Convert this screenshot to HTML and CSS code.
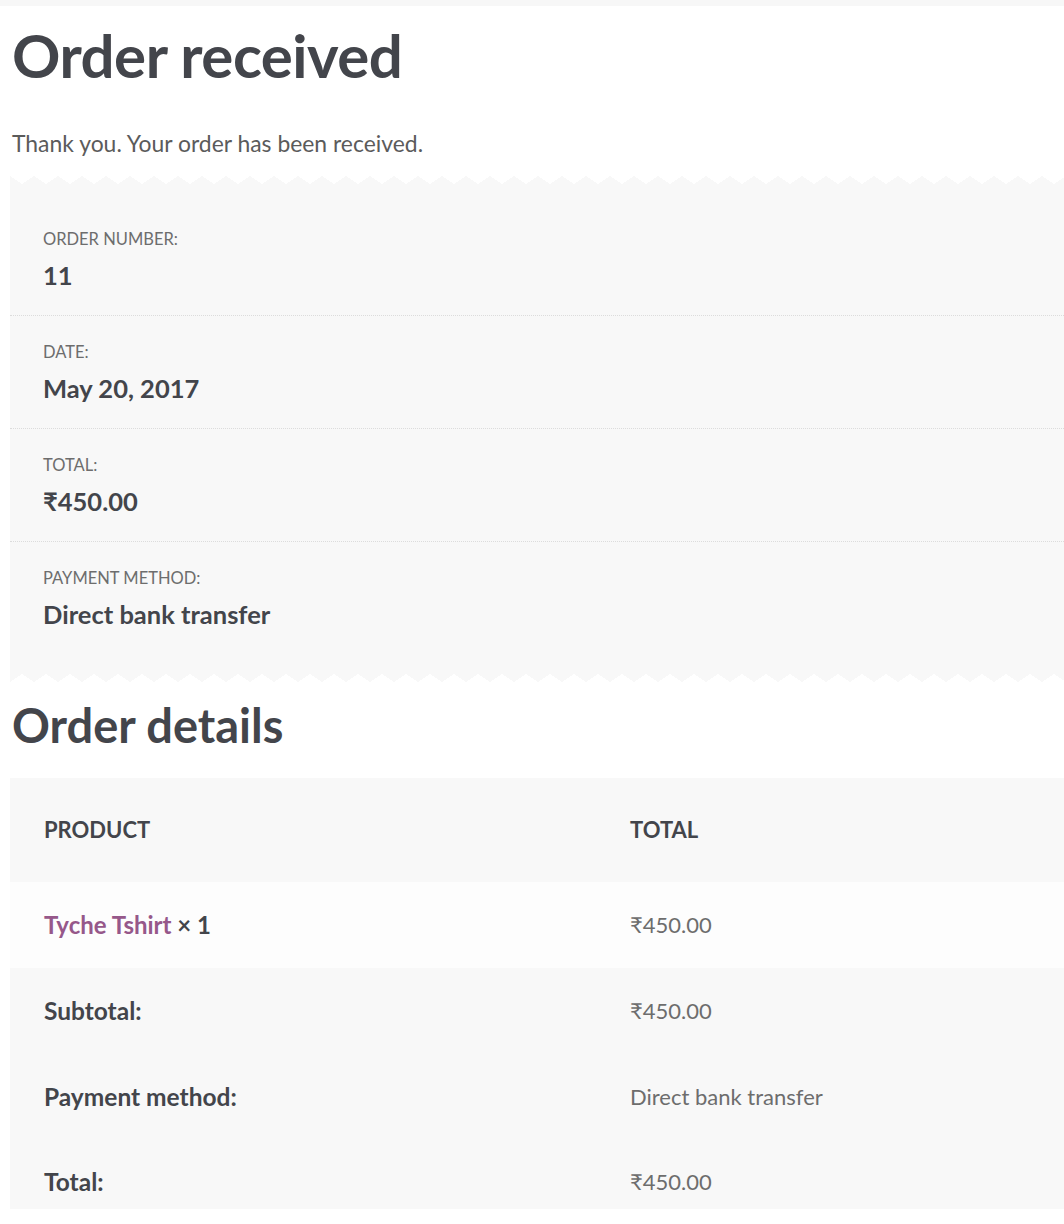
FILE: index.html
```html
<!DOCTYPE html>
<html lang="en">
<head>
    <meta charset="UTF-8">
    <title>Order received</title>
    <link rel="stylesheet" href="styles.css">
</head>
<body>
    <div class="top-strip"></div>

    <div class="page">
        <h1 class="page-title">Order received</h1>

        <p class="thankyou">Thank you. Your order has been received.</p>

        <!-- 주문 요약 (영수증 모양) -->
        <div class="receipt">
            <ul class="overview">
                <li class="overview-item">
                    <span class="overview-label">Order number:</span>
                    <strong class="overview-value">11</strong>
                </li>
                <li class="overview-item">
                    <span class="overview-label">Date:</span>
                    <strong class="overview-value">May 20, 2017</strong>
                </li>
                <li class="overview-item">
                    <span class="overview-label">Total:</span>
                    <strong class="overview-value">₹450.00</strong>
                </li>
                <li class="overview-item">
                    <span class="overview-label">Payment method:</span>
                    <strong class="overview-value">Direct bank transfer</strong>
                </li>
            </ul>
        </div>

        <h2 class="section-title">Order details</h2>

        <table class="details">
            <thead>
                <tr>
                    <th class="col-product">Product</th>
                    <th>Total</th>
                </tr>
            </thead>
            <tbody>
                <tr class="item-row">
                    <td class="col-product"><a href="#">Tyche Tshirt</a> <strong>× 1</strong></td>
                    <td>₹450.00</td>
                </tr>
            </tbody>
            <tfoot>
                <tr>
                    <th class="col-product">Subtotal:</th>
                    <td>₹450.00</td>
                </tr>
                <tr>
                    <th class="col-product">Payment method:</th>
                    <td>Direct bank transfer</td>
                </tr>
                <tr class="last-row">
                    <th class="col-product">Total:</th>
                    <td>₹450.00</td>
                </tr>
            </tfoot>
        </table>
    </div>
</body>
</html>
```

FILE: styles.css
```css
body {
    margin: 0;
    background: #ffffff;
    color: #6d6d6d;
    font-family: "Lato", "Open Sans", sans-serif;
    overflow-x: hidden;
}

/* 맨 위 얇은 회색 띠 */
.top-strip {
    height: 6px;
    background-color: #f7f7f7;
}

.page {
    padding-left: 10px;
}

.page-title {
    margin: 8px 0 0 2px;
    font-size: 60px;
    line-height: 82px;
    font-weight: 700;
    color: #43454b;
    letter-spacing: -0.5px;
}

.thankyou {
    margin: 29px 0 0 2px;
    font-size: 22.9px;
    line-height: 36px;
    color: #5b5b5b;
}

/* 영수증 박스 - 위아래 톱니 모양 */
.receipt {
    margin-top: 15px;
}

.receipt::before,
.receipt::after {
    content: "";
    display: block;
    height: 16px;
    background-size: 24px 16px;
    background-repeat: repeat-x;
}

.receipt::before {
    background-image:
        linear-gradient(to top right, #f8f8f8 50%, transparent 50%),
        linear-gradient(to top left, #f8f8f8 50%, transparent 50%);
}

.receipt::after {
    background-image:
        linear-gradient(to bottom right, #f8f8f8 50%, transparent 50%),
        linear-gradient(to bottom left, #f8f8f8 50%, transparent 50%);
}

.overview {
    list-style: none;
    margin: 0;
    padding: 11px 0 12px;
    background-color: #f8f8f8;
}

.overview-item {
    padding: 24px 33px 28px;
    border-bottom: 1px dotted #dcdcdc;
}

.overview-item:last-child {
    border-bottom: none;
}

.overview-label {
    display: block;
    font-size: 16.5px;
    line-height: 24px;
    text-transform: uppercase;
    color: #6d6d6d;
}

.overview-value {
    display: block;
    margin-top: 12px;
    font-size: 25.5px;
    line-height: 24px;
    font-weight: 700;
    color: #43454b;
}

.section-title {
    margin: 15px 0 0 2px;
    font-size: 47px;
    line-height: 56px;
    font-weight: 700;
    color: #43454b;
}

/* 주문 상세 표 */
.details {
    margin-top: 25px;
    width: 1060px;
    border-collapse: collapse;
    font-size: 22px;
}

.details th,
.details td {
    padding: 0 34px;
    height: 86px;
    text-align: left;
    vertical-align: middle;
    line-height: 32px;
}

.details .col-product {
    width: 518px;
}

.details thead th {
    height: 104px;
    background-color: #f8f8f8;
    text-transform: uppercase;
    font-size: 22px;
    font-weight: 700;
    color: #43454b;
}

.details .item-row td {
    background-color: #fdfdfd;
}

.details tfoot th,
.details tfoot td {
    background-color: #f8f8f8;
}

.details tfoot th {
    font-size: 24.5px;
    font-weight: 700;
    color: #43454b;
}

.details td {
    color: #6d6d6d;
}

/* 마지막 줄은 아래 여백 없이 잘림 */
.details .last-row th,
.details .last-row td {
    height: 43px;
    padding-top: 26px;
    vertical-align: top;
}

.details a {
    font-size: 24px;
    color: #96588a;
    font-weight: 700;
    text-decoration: none;
}

.details td strong {
    font-size: 24px;
    color: #43454b;
}
```
